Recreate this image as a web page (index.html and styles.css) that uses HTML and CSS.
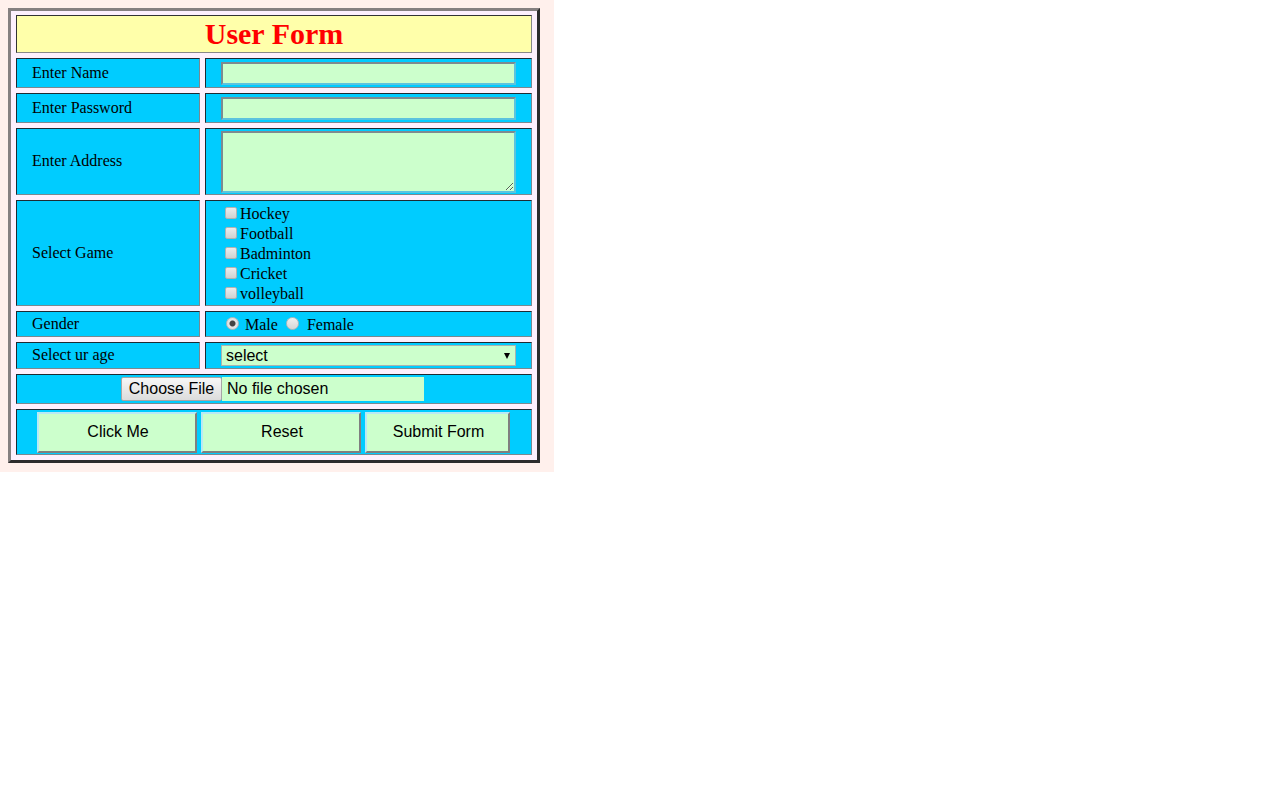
FILE: index.html
```html
<!DOCTYPE html>
<html>
<head>
<meta charset="utf-8">
<title>User Form</title>
<link rel="stylesheet" href="styles.css">
</head>
<body>
<div class="page">
  <form class="form">
    <div class="cell head">User Form</div>

    <div class="cell label">Enter Name</div>
    <div class="cell field"><input class="text" type="text"></div>

    <div class="cell label">Enter Password</div>
    <div class="cell field"><input class="text" type="password"></div>

    <div class="cell label">Enter Address</div>
    <div class="cell field"><textarea class="area"></textarea></div>

    <div class="cell label">Select Game</div>
    <div class="cell field">
      <div class="games">
        <label class="game"><input class="check" type="checkbox">Hockey</label>
        <label class="game"><input class="check" type="checkbox">Football</label>
        <label class="game"><input class="check" type="checkbox">Badminton</label>
        <label class="game"><input class="check" type="checkbox">Cricket</label>
        <label class="game"><input class="check" type="checkbox">volleyball</label>
      </div>
    </div>

    <div class="cell label">Gender</div>
    <div class="cell field gender">
      <input class="radio" type="radio" name="g" checked><span class="rlabel">Male</span>
      <input class="radio second" type="radio" name="g"><span class="rlabel">Female</span>
    </div>

    <div class="cell label">Select ur age</div>
    <div class="cell field">
      <div class="selwrap">
        <select class="sel"><option>select</option></select>
      </div>
    </div>

    <div class="cell wide file">
      <div class="filepick"><span class="choose">Choose File</span><span class="nofile">No file chosen</span></div>
    </div>

    <div class="cell wide actions">
      <button type="button" class="btn b1">Click Me</button>
      <button type="reset" class="btn b2">Reset</button>
      <button type="button" class="btn b3">Submit Form</button>
    </div>
  </form>
</div>
</body>
</html>
```

FILE: styles.css
```css
html { background: #ffffff; }
body {
  margin: 0;
  font-family: "Liberation Serif", "Times New Roman", serif;
  font-size: 16px;
  color: #000;
}
.page {
  width: 532px;
  padding: 8px 14px 9px 8px;
  background: #fff0ec;
}
.form {
  box-sizing: border-box;
  width: 532px;
  margin: 0;
  display: grid;
  grid-template-columns: 184px 327px;
  grid-template-rows: 38px 30px 30px 67px 106px 26px 27px 30px 46px;
  gap: 5px;
  padding: 4px 5px 5px 5px;
  border: 3px solid;
  border-color: #858080 #2c2c2c #2c2c2c #858080;
  background: #fdf0fd;
}
.cell {
  box-sizing: border-box;
  border: 1px solid;
  border-color: #1e2a33 #7a8890 #7a8890 #1e2a33;
  background: #00ccff;
  padding: 0 15px;
  display: flex;
  align-items: center;
}
.label { padding-bottom: 1px; }
.head {
  grid-column: 1 / -1;
  justify-content: center;
  background: #ffffaa;
  border-color: #333 #888 #888 #333;
  color: #ff0000;
  font-weight: bold;
  font-size: 30px;
}
.wide { grid-column: 1 / -1; }

.text {
  box-sizing: border-box;
  width: 295px;
  height: 23px;
  margin: 0;
  padding: 0 2px;
  border: 2px solid;
  border-color: #7d8a90 #5cc3de #5cc3de #7d8a90;
  background: #ccffcc;
  font: 16px "Liberation Sans", Arial, sans-serif;
}
.area {
  box-sizing: border-box;
  width: 296px;
  height: 62px;
  margin: 0;
  border: 2px solid;
  border-color: #7d8a90 #5cc3de #5cc3de #7d8a90;
  background: #ccffcc;
  resize: both;
}

.games { display: flex; flex-direction: column; padding-top: 2px; }
.game {
  display: flex;
  align-items: center;
  height: 20px;
  line-height: 20px;
}
.check {
  appearance: none;
  box-sizing: border-box;
  width: 12px;
  height: 12px;
  margin: -3px 3px 0 4px;
  border: 1px solid #b3b3b3;
  border-radius: 2px;
  background: linear-gradient(#ececec, #d2d2d2);
}

.gender { padding-top: 1px; }
.radio {
  appearance: none;
  box-sizing: border-box;
  width: 13px;
  height: 13px;
  margin: -2px 3px 0 5px;
  border: 1px solid #b8b8b8;
  border-radius: 50%;
  background: linear-gradient(#f0f0f0, #d6d6d6);
}
.radio.second { margin-left: 7px; }
.radio:checked {
  background: radial-gradient(circle, #444 0 2.5px, #e6e6e6 3.5px, #d8d8d8 100%);
}
.rlabel { margin-left: 3px; margin-right: 1px; }
.rlabel:last-child { margin-left: 5px; }

.selwrap { position: relative; width: 295px; height: 21px; }
.sel {
  appearance: none;
  box-sizing: border-box;
  width: 295px;
  height: 21px;
  margin: 0;
  padding: 0 0 0 4px;
  border: 1px solid #a8b4b0;
  border-radius: 0;
  background: #ccffcc;
  color: #000;
  font: 16px "Liberation Sans", Arial, sans-serif;
}
.selwrap::after {
  content: "";
  position: absolute;
  right: 6px;
  top: 8px;
  border-left: 3.5px solid transparent;
  border-right: 3.5px solid transparent;
  border-top: 6px solid #000;
  pointer-events: none;
}

.file { justify-content: center; padding: 0 3px 0 0; }
.filepick { display: flex; align-items: stretch; height: 24px; }
.choose {
  box-sizing: border-box;
  width: 101px;
  display: flex;
  align-items: center;
  justify-content: center;
  border: 1px solid #a6a6a6;
  border-radius: 2px;
  background: linear-gradient(#f7f7f7, #dcdcdc);
  font: 16px "Liberation Sans", Arial, sans-serif;
  color: #000;
}
.nofile {
  box-sizing: border-box;
  width: 202px;
  padding-left: 5px;
  display: flex;
  align-items: center;
  background: #ccffcc;
  font: 16px "Liberation Sans", Arial, sans-serif;
}

.actions { padding: 0 0 0 20px; gap: 4px; }
.btn {
  box-sizing: border-box;
  height: 41px;
  margin: 0;
  padding: 0 0 0 2px;
  border: 2px solid;
  border-color: #b9e9f5 #7f7f7f #7f7f7f #b9e9f5;
  background: #ccffcc;
  color: #000;
  font: 16px "Liberation Sans", Arial, sans-serif;
}
.b1, .b2 { width: 160px; }
.b3 { width: 145px; }
```
